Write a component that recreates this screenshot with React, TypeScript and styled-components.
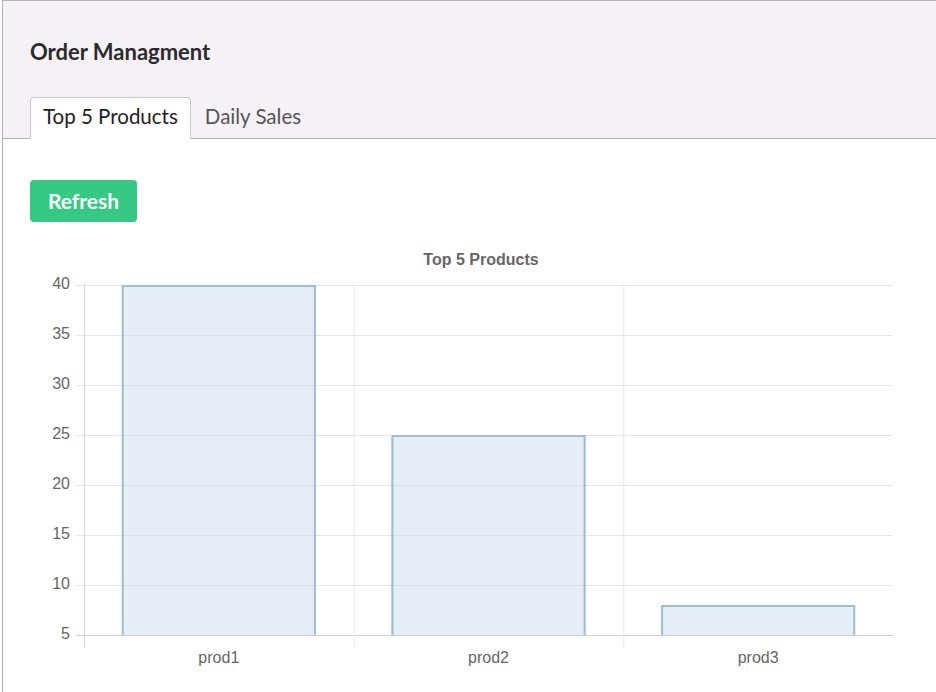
import React from "react";
import styled, { createGlobalStyle } from "styled-components";

const Global = createGlobalStyle`
  html, body { margin: 0; padding: 0; background: #fff; }
  body { font-family: Lato, "Noto Sans", sans-serif; overflow: hidden; }
`;

const Frame = styled.div`
  margin-left: 2px;
  border-left: 1px solid #b4b4b4;
  border-top: 1px solid #b4b4b4;
  min-height: 691px;
`;

const Header = styled.header`
  background: #f6f0f7;
  border-bottom: 1px solid #b0b0b0;
  padding: 37px 0 0 27px;
`;

const Title = styled.h1`
  margin: 0;
  font-size: 22px;
  line-height: 28px;
  font-weight: 700;
  color: #2b2b2b;
`;

const TabBar = styled.nav`
  display: flex;
  gap: 1px;
  margin-top: 31px;
  margin-bottom: -1px;
`;

const Tab = styled.button<{ $active?: boolean }>`
  font-family: Lato, "Noto Sans", sans-serif;
  font-size: 20.5px;
  line-height: 24px;
  padding: 6px 12px 10px;
  border: 1px solid ${(p) => (p.$active ? "#c9c9c9" : "transparent")};
  border-bottom-color: ${(p) => (p.$active ? "#fff" : "transparent")};
  border-radius: 4px 4px 0 0;
  background: ${(p) => (p.$active ? "#fff" : "transparent")};
  color: ${(p) => (p.$active ? "#222" : "#555")};
  cursor: pointer;
`;

const Body = styled.main`
  padding: 41px 0 0 27px;
`;

const RefreshButton = styled.button`
  font-family: Lato, "Noto Sans", sans-serif;
  font-size: 21px;
  font-weight: 700;
  line-height: 24px;
  height: 42px;
  width: 107px;
  border: none;
  border-radius: 4px;
  background: #35c985;
  color: #fff;
  cursor: pointer;
`;

const ChartSvg = styled.svg`
  display: block;
  margin-top: 18px;
  font-family: "Liberation Sans", Arial, sans-serif;
`;

const data = [
  { label: "prod1", value: 40 },
  { label: "prod2", value: 25 },
  { label: "prod3", value: 8 },
];

const left = 84;
const right = 893;
const bottom = 635;
const yOf = (v: number) => bottom - (v - 5) * 10;
const catW = (right - left) / data.length;
const barW = catW * 0.72;

function Chart() {
  const ticks = [5, 10, 15, 20, 25, 30, 35, 40];
  return (
    <ChartSvg width={880} height={452} viewBox="30 240 880 452">
      <text x={481} y={265} textAnchor="middle" fontSize={16} fontWeight={700} fill="#666">
        Top 5 Products
      </text>
      {ticks.map((t) => (
        <g key={t}>
          <line x1={76} x2={right} y1={yOf(t) + 0.5} y2={yOf(t) + 0.5} stroke={t === 5 ? "#cfcfcf" : "#e6e6e6"} strokeWidth={1} />
          <text x={70} y={yOf(t) + 4} textAnchor="end" fontSize={16} fill="#666">
            {t}
          </text>
        </g>
      ))}
      {data.map((d, i) => (
        <line
          key={d.label}
          x1={left + i * catW + 0.5}
          x2={left + i * catW + 0.5}
          y1={284}
          y2={648}
          stroke={i === 0 ? "#d6d6d6" : "#e8e8e8"}
          strokeWidth={1}
        />
      ))}
      {data.map((d, i) => {
        const cx = left + i * catW + catW / 2;
        const x0 = cx - barW / 2;
        const top = yOf(d.value);
        return (
          <g key={d.label}>
            <rect x={x0} y={top} width={barW} height={bottom - top} fill="rgba(190,210,232,0.4)" />
            <path
              d={`M${x0 + 1} ${bottom} V${top + 1} H${x0 + barW - 1} V${bottom}`}
              fill="none"
              stroke="#9dbecd"
              strokeWidth={2}
            />
            <text x={cx} y={663} textAnchor="middle" fontSize={16} fill="#666">
              {d.label}
            </text>
          </g>
        );
      })}
    </ChartSvg>
  );
}

export default function App() {
  return (
    <>
      <Global />
      <Frame>
        <Header>
          <Title>Order Managment</Title>
          <TabBar>
            <Tab $active>Top 5 Products</Tab>
            <Tab>Daily Sales</Tab>
          </TabBar>
        </Header>
        <Body>
          <RefreshButton>Refresh</RefreshButton>
          <Chart />
        </Body>
      </Frame>
    </>
  );
}
